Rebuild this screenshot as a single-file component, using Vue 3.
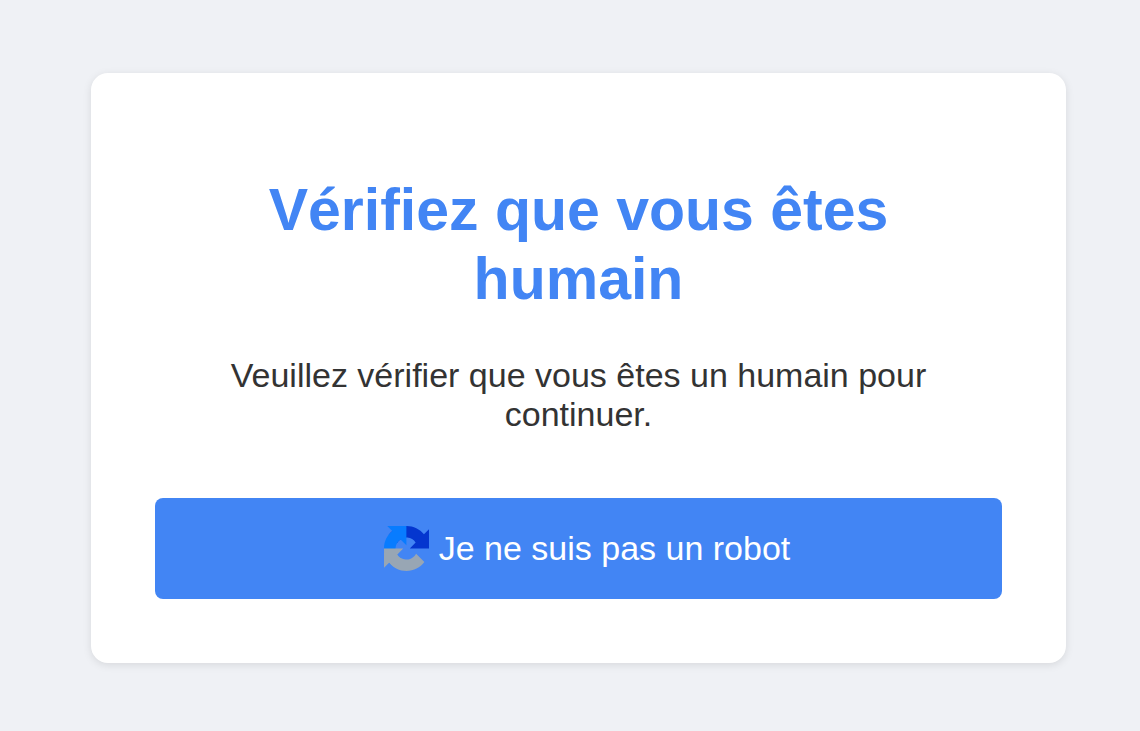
<script setup>
import { ref } from 'vue'

const verified = ref(false)
</script>

<template>
  <main class="page">
    <section class="card" aria-labelledby="title">
      <h1 id="title" class="title">Vérifiez que vous êtes humain</h1>
      <p class="text">Veuillez vérifier que vous êtes un humain pour continuer.</p>
      <button class="verify" type="button" :aria-pressed="verified" @click="verified = true">
        <svg class="logo" viewBox="0 0 64 64" aria-hidden="true">
          <path fill="#0436cf" d="M64 31.955l-.033-1.37V4.687l-7.16 7.16C50.948 4.674 42.033.093 32.05.093c-10.4 0-19.622 4.96-25.458 12.64l11.736 11.86a15.55 15.55 0 0 1 4.754-5.334c2.05-1.6 4.952-2.906 8.968-2.906.485 0 .86.057 1.135.163 4.976.393 9.288 3.14 11.828 7.124l-8.307 8.307L64 31.953" />
          <path fill="#087cff" d="M31.862.094l-1.37.033H4.594l7.16 7.16C4.58 13.147 0 22.06 0 32.046c0 10.4 4.96 19.622 12.64 25.458L24.5 45.768a15.55 15.55 0 0 1-5.334-4.754c-1.6-2.05-2.906-4.952-2.906-8.968 0-.485.057-.86.163-1.135.393-4.976 3.14-9.288 7.124-11.828l8.307 8.307L31.86.095" />
          <path fill="#98a6b4" d="M.001 32.045l.033 1.37v25.898l7.16-7.16c5.86 7.173 14.774 11.754 24.76 11.754 10.4 0 19.622-4.96 25.458-12.64l-11.736-11.86a15.55 15.55 0 0 1-4.754 5.334c-2.05 1.6-4.952 2.906-8.968 2.906-.485 0-.86-.057-1.135-.163-4.976-.393-9.288-3.14-11.828-7.124l8.307-8.307c-10.522.04-22.4.066-27.295-.005" />
        </svg>
        <span>Je ne suis pas un robot</span>
      </button>
    </section>
  </main>
</template>

<style>
body {
  margin: 0;
  background: #eff1f5;
}
</style>

<style scoped>
.page {
  box-sizing: border-box;
  min-height: 100vh;
  padding: 73px 74px 68px 91px;
  font-family: "Liberation Sans", Arial, sans-serif;
  background: #eff1f5;
}

.card {
  padding: 64px;
  border-radius: 17px;
  background: #fff;
  box-shadow: 0 2px 9px rgba(0, 0, 0, 0.1);
  text-align: center;
}

.title {
  margin: 39px 0 42px;
  padding: 0 32px;
  color: #4285f4;
  font-size: 59px;
  font-weight: 700;
  line-height: 69px;
}

.text {
  margin: 0 0 64px;
  color: #333;
  font-size: 34px;
  line-height: 39px;
}

.verify {
  display: flex;
  align-items: center;
  justify-content: center;
  gap: 10px;
  width: 100%;
  padding: 28px 0 28px 17px;
  border: 0;
  border-radius: 8px;
  background: #4285f4;
  color: #fff;
  font-family: inherit;
  font-size: 34px;
  line-height: 39px;
  cursor: pointer;
}

.logo {
  width: 45px;
  height: 45px;
}
</style>
